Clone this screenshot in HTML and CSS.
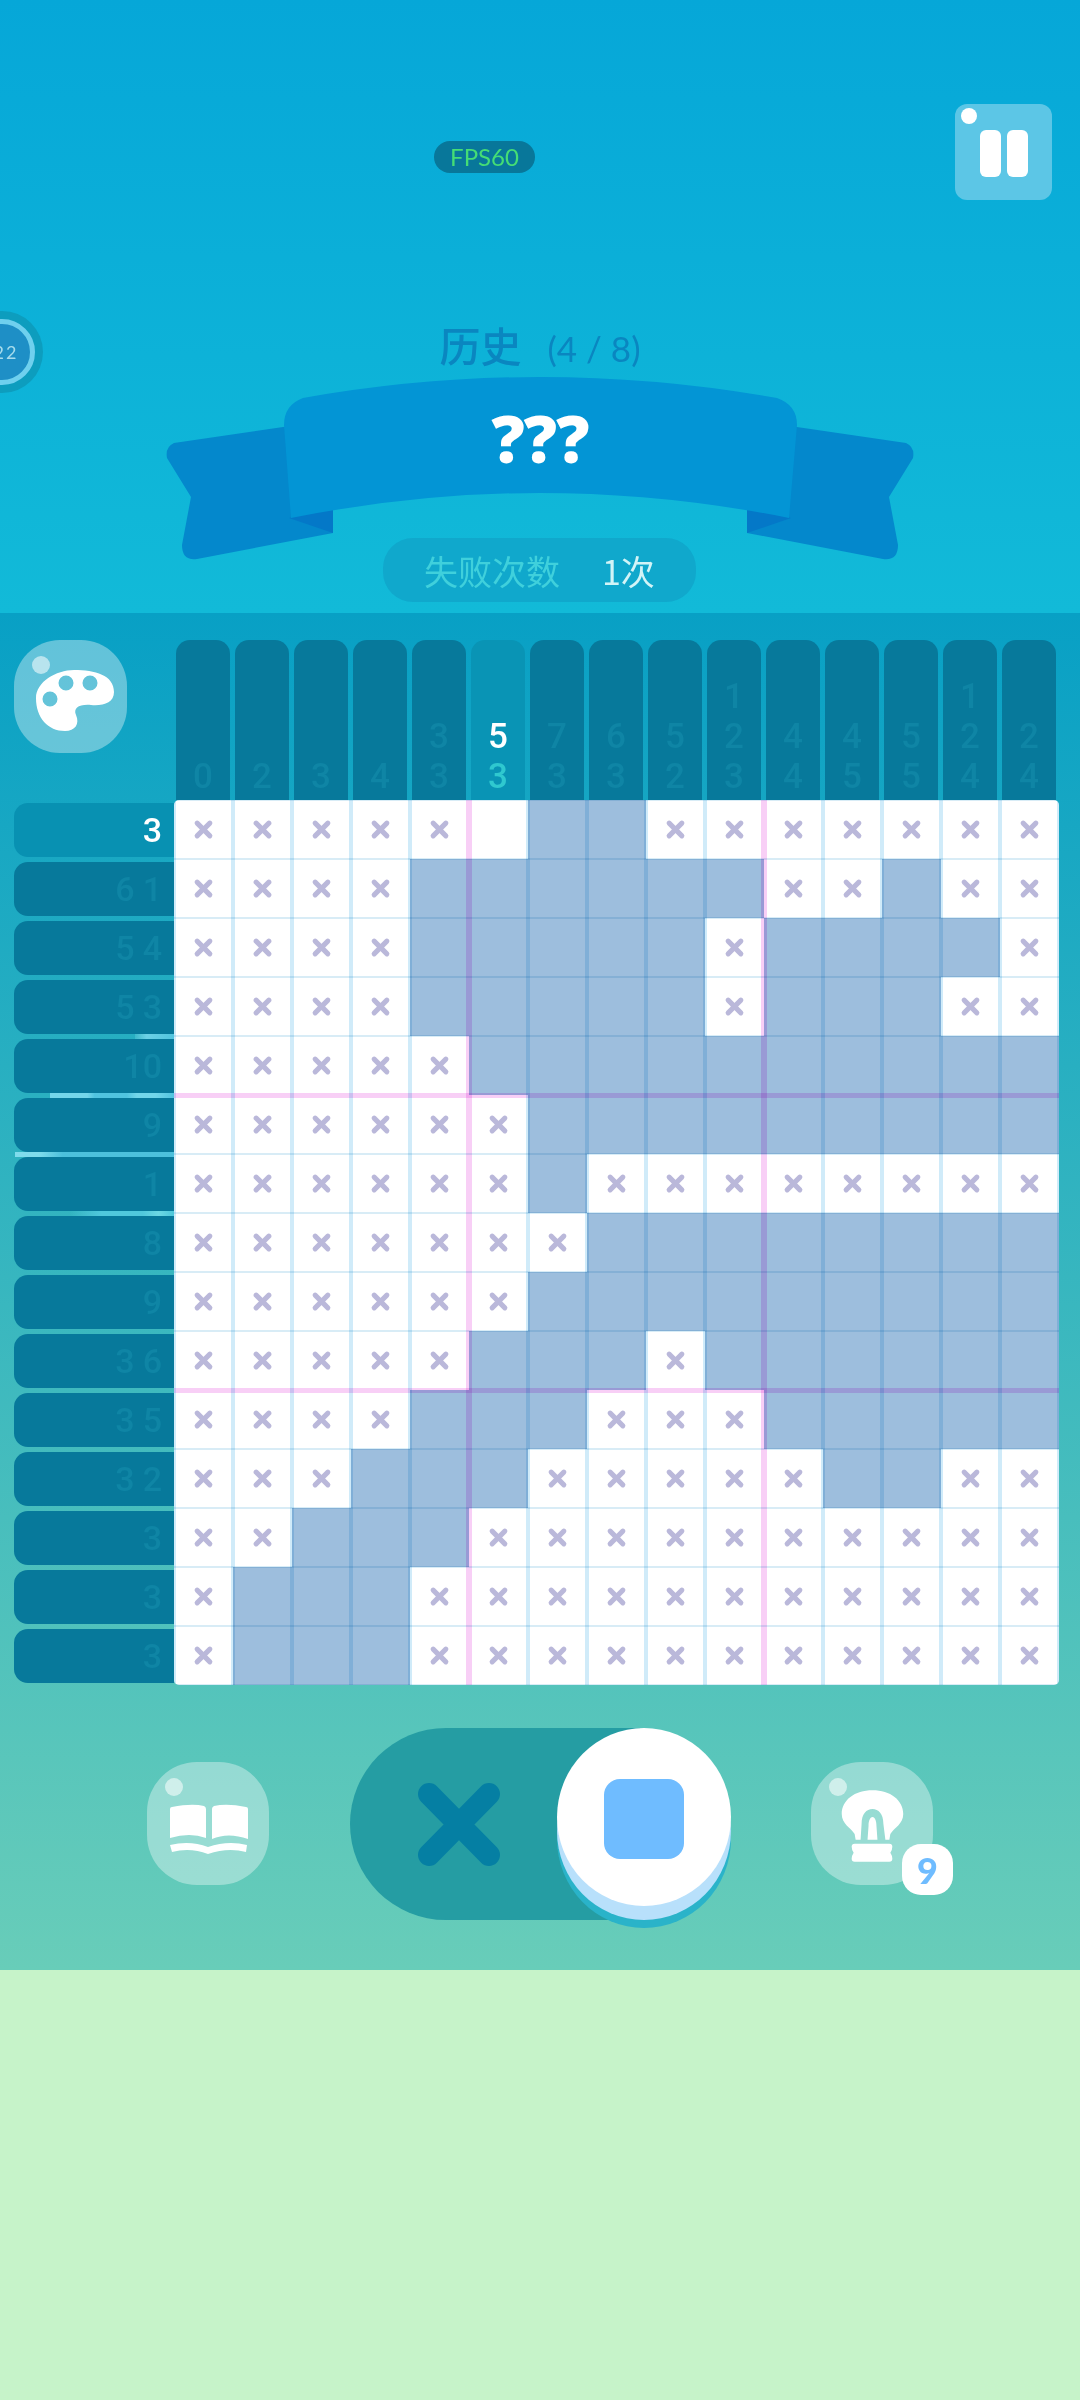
FILE: index.html
```html
<!DOCTYPE html>
<html lang="zh-CN">
<head>
    <meta charset="UTF-8">
    <meta name="viewport" content="width=device-width, initial-scale=1.0">
    <title>Nonogram</title>
    <link rel="stylesheet" href="styles.css">
</head>
<body>
    <div class="screen">
        <header class="top">
            <div class="timer">
                <div class="timer-ring"><span>22</span></div>
            </div>

            <div class="topbar">
                <div class="fps">FPS60</div>
                <button class="pause">
                    <span class="pause-bar"></span>
                    <span class="pause-bar"></span>
                </button>
            </div>

            <div class="title">
                <span class="title-name">历史</span>
                <span class="title-count">(4 / 8)</span>
            </div>

            <div class="banner">
                <svg class="banner-art" viewBox="160 370 760 195">
                    <path fill="#0488cc" d="M290 426L174 443Q165 447 167 458L191 497L182 545Q182 561 197 559L333 533V500H290Z"/>
                    <path fill="#0488cc" d="M790 426L906 443Q915 447 913 458L889 497L898 545Q898 561 883 559L747 533V500H790Z"/>
                    <path fill="#0478c8" d="M289 518L333 508V533Z"/>
                    <path fill="#0478c8" d="M791 518L747 508V533Z"/>
                    <path fill="#0395d5" d="M303 398Q540 356 777 398Q797 405 797 425L789 518Q540 468 291 518L284 425Q284 405 303 398Z"/>
                </svg>
                <div class="banner-text">???</div>
            </div>

            <div class="fails">
                <span class="fails-label">失败次数</span>
                <span class="fails-value">1次</span>
            </div>
        </header>

        <main class="panel">
            <div class="board-head">
                <div class="palette-cell">
                    <button class="round-btn palette">
                        <svg class="btn-icon" viewBox="-1 0 113 113">
                            <path fill="#fff" fill-rule="evenodd" d="M21 58C21 42 41 30 59 30C80 30 99 35 99 52C99 63 88 66 76 65C64 64 58 68 61 75C65 84 60 91 50 91C33 91 21 78 21 58ZM51 35.500A7.500 7.500 0 1 0 51 50.500A7.500 7.500 0 1 0 51 35.500ZM75 35.500A7.500 7.500 0 1 0 75 50.500A7.500 7.500 0 1 0 75 35.500ZM35 51.500A7.500 7.500 0 1 0 35 66.500A7.500 7.500 0 1 0 35 51.500Z"/>
                        </svg>
                    </button>
                </div>
                <div class="col-clues" id="colClues"></div>
            </div>

            <div class="board-body">
                <div class="row-clues" id="rowClues">
                    <div class="glint glint-a"></div>
                    <div class="glint glint-b"></div>
                    <div class="glint glint-c"></div>
                    <div class="glint glint-d"></div>
                </div>
                <div class="grid" id="grid">
                    <div class="grid-lines lines-v"></div>
                    <div class="grid-lines lines-h"></div>
                </div>
            </div>

            <div class="controls">
                <button class="round-btn tool book">
                    <svg class="btn-icon" viewBox="0 0 122 123">
                        <path fill="#fff" d="M23 47Q23 45 25 45Q45 41 57 44Q59 45 59 47V76Q43 70 23 76Z"/>
                        <path fill="#fff" d="M65 47Q65 45 67 44Q80 41 99 45Q101 45 101 47V77Q81 70 65 77Z"/>
                        <path fill="#fff" d="M23 83Q43 78 61 85Q81 78 100 83L99 90Q81 85 61 92Q43 85 25 90Z"/>
                    </svg>
                </button>

                <div class="mode-toggle">
                    <svg class="mode-x" viewBox="0 0 86 85">
                        <path fill="none" stroke="#057fa3" stroke-width="22" stroke-linecap="round" d="M13 12L73 73M73 12L13 73"/>
                    </svg>
                    <div class="knob"><span class="knob-fill"></span></div>
                </div>

                <button class="round-btn tool bulb">
                    <svg class="btn-icon" viewBox="0 0 123 123">
                        <path fill="#fff" fill-rule="evenodd" d="M62 28C80 28 93 38 93 52C93 62 84 66 80 72L79 78H45L44 72C40 66 31 62 31 52C31 38 44 28 62 28ZM50 78L51 62C51 52 56 47 62 47C68 47 73 52 73 62L75 78H67L66 64C66 58 64 55 62 55C60 55 58 58 58 64L57 78Z"/>
                        <path fill="#fff" d="M44 82H79Q82 82 82 85Q82 88 80 91Q82 94 82 97Q82 100 79 100H44Q41 100 41 97Q41 94 43 91Q41 88 41 85Q41 82 44 82Z"/>
                    </svg>
                    <span class="badge">9</span>
                </button>
            </div>
        </main>

        <footer class="bottom"></footer>
    </div>

    <script src="board.js"></script>
</body>
</html>
```

FILE: styles.css
```css
* {
    margin: 0;
    padding: 0;
    box-sizing: border-box;
}

body {
    width: 1080px;
    height: 2400px;
    overflow: hidden;
    font-family: Roboto, "Noto Sans CJK SC", sans-serif;
}

button {
    border: none;
    font: inherit;
}

.screen {
    display: flex;
    flex-direction: column;
    height: 2400px;
}

/* Header area */
.top {
    position: relative;
    height: 613px;
    background: linear-gradient(180deg, #06a7d8 0%, #12bad8 100%);
}

.timer {
    position: absolute;
    left: -39px;
    top: 311px;
    width: 82px;
    height: 82px;
    padding: 8px;
    border-radius: 50%;
    background-color: #0d9dbe;
}

.timer-ring {
    display: flex;
    align-items: center;
    justify-content: center;
    height: 100%;
    padding-left: 8px;
    border: 5px solid #6fd0ee;
    border-radius: 50%;
    background-color: #1e8fc6;
    color: #a7dcec;
    font-family: Lato, sans-serif;
    font-size: 18px;
    letter-spacing: 2px;
}

.topbar {
    display: flex;
    align-items: flex-start;
    padding: 104px 28px 0 434px;
}

.fps {
    width: 101px;
    height: 32px;
    margin-top: 37px;
    border-radius: 16px;
    background-color: #08779a;
    color: #45dd75;
    font-family: Lato, sans-serif;
    font-size: 24px;
    line-height: 32px;
    text-align: center;
}

.pause {
    position: relative;
    display: flex;
    justify-content: center;
    gap: 6px;
    width: 97px;
    height: 96px;
    margin-left: auto;
    padding-top: 26px;
    border-radius: 12px;
    background-color: #5cc6e6;
}

/* little shine dot on the buttons */
.pause::before {
    content: "";
    position: absolute;
    left: 6px;
    top: 4px;
    width: 16px;
    height: 16px;
    border-radius: 50%;
    background-color: #fff;
}

.pause-bar {
    width: 21px;
    height: 47px;
    border-radius: 6px;
    background-color: #fff;
}

.title {
    display: flex;
    align-items: center;
    justify-content: center;
    gap: 26px;
    height: 40px;
    margin-top: 124px;
    color: #0a86c0;
}

.title-name {
    font-family: "Noto Sans CJK SC", sans-serif;
    font-size: 41px;
    font-weight: 500;
    line-height: 40px;
}

.title-count {
    padding-top: 8px;
    font-family: Lato, sans-serif;
    font-size: 35px;
    font-weight: 400;
}

.banner {
    position: relative;
    width: 760px;
    height: 195px;
    margin: 6px auto 0;
}

.banner-art {
    display: block;
    width: 100%;
    height: 100%;
}

.banner-text {
    position: absolute;
    left: 0;
    right: 0;
    top: 24px;
    color: #fff;
    font-family: "Open Sans", sans-serif;
    font-size: 66px;
    font-weight: 800;
    line-height: 86px;
    letter-spacing: -1px;
    text-align: center;
}

.fails {
    position: relative;
    display: flex;
    align-items: center;
    gap: 42px;
    width: 313px;
    height: 64px;
    margin: -27px 0 0 383px;
    padding-left: 41px;
    border-radius: 30px;
    background-color: #10a8cc;
    font-family: "Noto Sans CJK SC", sans-serif;
    font-size: 34px;
    font-weight: 400;
}

.fails-label {
    color: #3fd0dc;
}

.fails-value {
    color: #d2f4f7;
}

/* Game panel */
.panel {
    height: 1357px;
    padding-top: 27px;
    background: linear-gradient(180deg, #08a0c5 0%, #68cdb9 100%);
}

.board-head {
    display: flex;
    height: 160px;
}

.palette-cell {
    width: 176px;
    padding-left: 14px;
}

.round-btn {
    position: relative;
    display: block;
    background-color: rgba(255, 255, 255, 0.36);
}

.round-btn::before {
    content: "";
    position: absolute;
    left: 18px;
    top: 16px;
    width: 18px;
    height: 18px;
    border-radius: 50%;
    background-color: rgba(255, 255, 255, 0.55);
}

.btn-icon {
    display: block;
    width: 100%;
    height: 100%;
}

.palette {
    width: 113px;
    height: 113px;
    border-radius: 46px;
}

.col-clues {
    display: flex;
    gap: 5px;
}

.col-clue {
    display: flex;
    flex-direction: column;
    justify-content: flex-end;
    width: 54px;
    height: 160px;
    padding-bottom: 3px;
    border-radius: 14px 14px 0 0;
    background-color: #07799b;
    color: #0f85a5;
    font-size: 35px;
    font-weight: 500;
    line-height: 40px;
    text-align: center;
}

.col-clue.active {
    background-color: #0994b5;
    color: #2fc8cf;
}

.col-clue.active .num:first-child {
    color: #fff;
}

.board-body {
    display: flex;
}

.row-clues {
    position: relative;
    display: flex;
    flex-direction: column;
    gap: 5px;
    width: 174px;
    padding: 3px 0 0 14px;
}

.row-clue {
    display: flex;
    align-items: center;
    justify-content: flex-end;
    gap: 8px;
    height: 54px;
    padding-right: 12px;
    border-radius: 14px 0 0 14px;
    background-color: #07799b;
    color: #0f85a5;
    font-size: 34px;
    font-weight: 500;
}

.row-clue.active {
    background-color: #0891b2;
    color: #fff;
}

/* shimmer that shows through the gaps between the clue rows */
.glint {
    position: absolute;
    right: 0;
    height: 5px;
}

.glint-a {
    top: 234px;
    width: 39px;
    background: linear-gradient(90deg, rgba(150, 230, 240, 0.2), #6cd0e6 30%, #50c4de);
}

.glint-b {
    top: 293px;
    width: 124px;
    background: linear-gradient(90deg, #74d6ea 0 30%, #50c4e0 36% 62%, #72d6ea 70% 85%, #50c4e0);
}

.glint-c {
    top: 352px;
    width: 159px;
    background: linear-gradient(90deg, #7fdcec 0 15%, #4cc0dc 30%);
}

.glint-d {
    top: 411px;
    width: 104px;
    background: linear-gradient(90deg, rgba(80, 200, 220, 0) 0, #50c8dc 30% 70%, #6cd8e4 85%, #4cc6da);
}

.grid {
    position: relative;
    display: grid;
    grid-template-columns: repeat(15, 59px);
    grid-auto-rows: 59px;
    width: 885px;
    height: 885px;
    border-radius: 5px;
    overflow: hidden;
    background-color: #fff;
}

.cell {
    position: relative;
}

.cell.fill {
    background-color: #9dbedd;
}

.cell.mark::before,
.cell.mark::after {
    content: "";
    position: absolute;
    left: 18px;
    top: 27px;
    width: 23px;
    height: 5px;
    border-radius: 3px;
    background-color: #bab8da;
    transform: rotate(45deg);
}

.cell.mark::after {
    transform: rotate(-45deg);
}

/* grid lines darken whatever is under them, on white and on filled cells */
.grid-lines {
    position: absolute;
    inset: 0;
    mix-blend-mode: multiply;
    background-repeat: no-repeat;
}

.lines-v {
    background-image:
        linear-gradient(#f8cff6, #f8cff6),
        linear-gradient(#f8cff6, #f8cff6),
        repeating-linear-gradient(90deg, #d0ebf9 0 2px, transparent 2px 57px, #d0ebf9 57px 59px);
    background-size: 6px 100%, 6px 100%, auto;
    background-position: 292px 0, 587px 0, 0 0;
}

.lines-h {
    background-image:
        linear-gradient(#f8cff6, #f8cff6),
        linear-gradient(#f8cff6, #f8cff6),
        repeating-linear-gradient(180deg, #d8ecf6 0 1px, transparent 1px 58px, #d8ecf6 58px 59px);
    background-size: 100% 5px, 100% 5px, auto;
    background-position: 0 293px, 0 588px, 0 0;
}

/* Bottom controls */
.controls {
    display: flex;
    align-items: flex-start;
    height: 192px;
    margin-top: 43px;
    padding-left: 147px;
}

.tool {
    width: 122px;
    height: 123px;
    margin-top: 34px;
    border-radius: 50px;
}

.mode-toggle {
    position: relative;
    display: flex;
    align-items: center;
    width: 290px;
    height: 192px;
    margin: 0 171px 0 81px;
    padding-left: 66px;
    border-radius: 96px 0 0 96px;
    background-color: #259da3;
}

.mode-x {
    display: block;
    width: 86px;
    height: 85px;
}

.knob {
    position: absolute;
    left: 207px;
    top: 0;
    display: flex;
    align-items: center;
    justify-content: center;
    width: 174px;
    height: 178px;
    border-radius: 50%;
    background-color: #fff;
    box-shadow: 0 14px 0 #b8e0fb, 0 22px 0 #2ab3c9;
}

.knob-fill {
    width: 80px;
    height: 80px;
    margin-top: 4px;
    border-radius: 16px;
    background-color: #6fbcff;
}

.badge {
    position: absolute;
    left: 91px;
    top: 82px;
    display: flex;
    align-items: center;
    justify-content: center;
    width: 51px;
    height: 51px;
    border-radius: 19px;
    background-color: #fff;
    color: #6fbcff;
    font-family: Lato, sans-serif;
    font-size: 36px;
    font-weight: 900;
}

.bottom {
    flex: 1;
    background-color: #c6f3c9;
}
```

FILE: board.js
```js
// clue numbers, read top to bottom
const colClues = [
    [0], [2], [3], [4], [3, 3], [5, 3], [7, 3], [6, 3],
    [5, 2], [1, 2, 3], [4, 4], [4, 5], [5, 5], [1, 2, 4], [2, 4]
];
const rowClues = [
    [3], [6, 1], [5, 4], [5, 3], [10], [9], [1], [8],
    [9], [3, 6], [3, 5], [3, 2], [3], [3], [3]
];

// x = crossed out, # = filled, . = empty
const board = [
    'xxxxx.##xxxxxxx',
    'xxxx######xx#xx',
    'xxxx#####x####x',
    'xxxx#####x###xx',
    'xxxxx##########',
    'xxxxxx#########',
    'xxxxxx#xxxxxxxx',
    'xxxxxxx########',
    'xxxxxx#########',
    'xxxxx###x######',
    'xxxx###xxx#####',
    'xxx###xxxxx##xx',
    'xx###xxxxxxxxxx',
    'x###xxxxxxxxxxx',
    'x###xxxxxxxxxxx'
];

const activeCol = 5;
const activeRow = 0;

function numSpans(nums) {
    return nums.map(n => `<span class="num">${n}</span>`).join('');
}

document.getElementById('colClues').innerHTML = colClues.map((nums, i) =>
    `<div class="col-clue${i === activeCol ? ' active' : ''}">${numSpans(nums)}</div>`
).join('');

document.getElementById('rowClues').insertAdjacentHTML('beforeend', rowClues.map((nums, i) =>
    `<div class="row-clue${i === activeRow ? ' active' : ''}">${numSpans(nums)}</div>`
).join(''));

const kinds = { x: 'mark', '#': 'fill', '.': '' };
document.getElementById('grid').insertAdjacentHTML('afterbegin', board.map(row =>
    [...row].map(c => `<div class="cell ${kinds[c]}"></div>`).join('')
).join(''));
```
